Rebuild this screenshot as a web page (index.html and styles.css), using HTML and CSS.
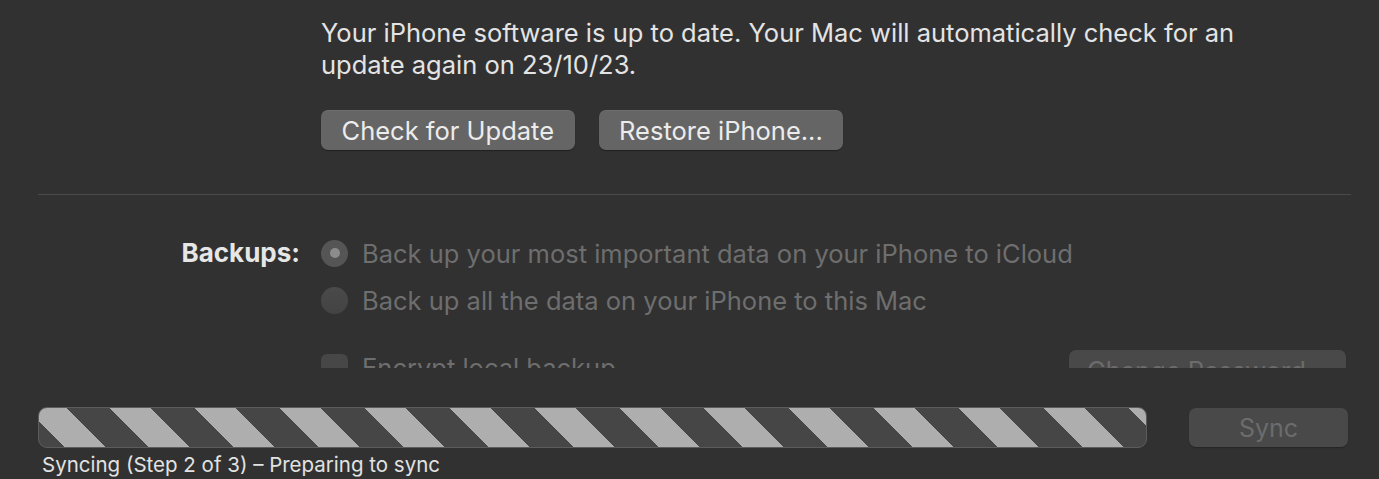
FILE: index.html
```html
<!DOCTYPE html>
<html lang="en">
<head>
<meta charset="utf-8">
<title>iPhone Sync</title>
<link rel="stylesheet" href="styles.css">
</head>
<body>
<div class="window">
  <div class="scroll">
    <section class="update">
      <p class="update-text">Your iPhone software is up to date. Your Mac will automatically check for an update again on 23/10/23.</p>
      <div class="btn-row">
        <button class="btn">Check for Update</button>
        <button class="btn">Restore iPhone...</button>
      </div>
    </section>
    <hr class="sep">
    <section class="backups">
      <div class="label">Backups:</div>
      <div class="options">
        <div class="opt">
          <span class="radio selected"><span class="dot"></span></span>
          <span class="opt-text">Back up your most important data on your iPhone to iCloud</span>
        </div>
        <div class="opt">
          <span class="radio"></span>
          <span class="opt-text">Back up all the data on your iPhone to this Mac</span>
        </div>
        <div class="opt opt-encrypt">
          <span class="check"></span>
          <span class="opt-text">Encrypt local backup</span>
          <button class="btn btn-disabled pw">Change Password...</button>
        </div>
      </div>
    </section>
  </div>
  <div class="footer">
    <div class="bar-row">
      <div class="progress"></div>
      <button class="btn btn-disabled sync">Sync</button>
    </div>
    <div class="status">Syncing (Step 2 of 3) – Preparing to sync</div>
  </div>
</div>
</body>
</html>
```

FILE: styles.css
```css
* { box-sizing: border-box; }
html, body {
  margin: 0;
  padding: 0;
  background: #313131;
}
body {
  font-family: Inter, "Noto Sans", "Liberation Sans", sans-serif;
  color: #e4e4e4;
  width: 1379px;
  height: 479px;
  overflow: hidden;
}
.window {
  display: flex;
  flex-direction: column;
  height: 479px;
}
.scroll {
  height: 368px;
  overflow: hidden;
}
.update {
  padding: 17px 0 0 321px;
}
.update-text {
  margin: 0;
  width: 960px;
  font-size: 25.5px;
  line-height: 32px;
  color: #e4e4e4;
}
.btn-row {
  display: flex;
  gap: 24px;
  margin-top: 29px;
}
.btn {
  font-family: inherit;
  font-size: 25.5px;
  height: 40px;
  padding: 0 20.5px;
  border: none;
  border-radius: 7px;
  background: #656565;
  color: #ececec;
  box-shadow: 0 1px 1px rgba(0,0,0,0.35), inset 0 1px 0 rgba(255,255,255,0.06);
}
.sep {
  margin: 44px 28px 0 38px;
  border: none;
  height: 1px;
  background: #4a4a4a;
}
.backups {
  display: flex;
  margin-top: 41px;
}
.label {
  width: 300px;
  text-align: right;
  font-weight: 700;
  font-size: 26px;
  line-height: 34px;
  color: #e6e6e6;
}
.options {
  margin-left: 21px;
  flex: 1;
  display: flex;
  flex-direction: column;
  gap: 13px;
}
.opt {
  display: flex;
  align-items: center;
  height: 34px;
}
.opt-text {
  margin-left: 14px;
  font-size: 25.5px;
  color: #6e6e6e;
}
.radio {
  width: 27px;
  height: 27px;
  border-radius: 50%;
  background: linear-gradient(#4a4a4a, #434343);
  display: flex;
  align-items: center;
  justify-content: center;
  flex: none;
}
.radio.selected { background: #555555; }
.dot {
  width: 10px;
  height: 10px;
  border-radius: 50%;
  background: #8c8c8c;
}
.opt-encrypt {
  margin-top: 20px;
  align-items: flex-start;
  padding-top: 4px;
}
.check {
  width: 27px;
  height: 27px;
  border-radius: 6px;
  background: #474747;
  flex: none;
}
.opt-encrypt .opt-text { margin-top: -2px; }
.pw {
  margin-left: auto;
  margin-right: 33px;
  margin-top: -4px;
  width: 277px;
  padding: 0;
}
.btn-disabled {
  background: #494949;
  color: #6c6c6c;
  box-shadow: 0 1px 1px rgba(0,0,0,0.25);
}
.footer {
  padding: 39px 31px 0 38px;
}
.bar-row {
  display: flex;
  align-items: center;
  gap: 42px;
}
.progress {
  width: 1109px;
  height: 41px;
  border-radius: 9px;
  border: 1px solid #5c5c5c;
  background: repeating-linear-gradient(45deg, #464646 0 17.7px, #aeaeae 17.7px 46.7px, #464646 46.7px 60px);
}
.sync {
  width: 159px;
  height: 39px;
  padding: 0;
  font-size: 25px;
}
.status {
  margin-top: 6px;
  margin-left: 4px;
  font-size: 20.5px;
  line-height: 22px;
  color: #e2e2e2;
}
```
